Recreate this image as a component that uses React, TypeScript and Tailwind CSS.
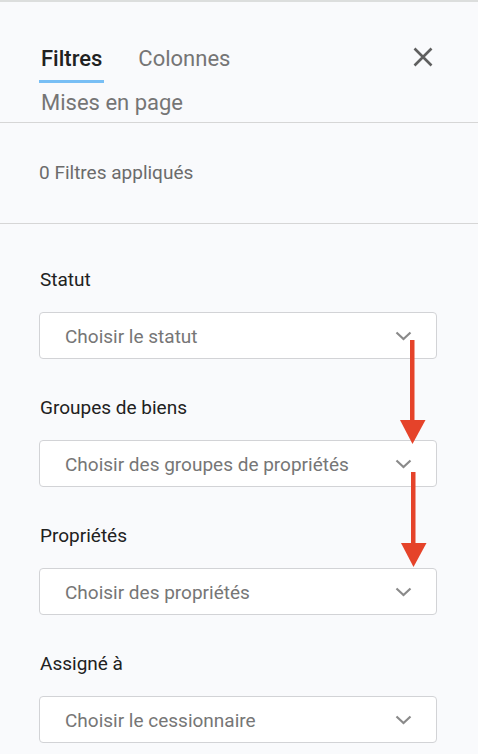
const fields = [
  { label: 'Statut', placeholder: 'Choisir le statut' },
  { label: 'Groupes de biens', placeholder: 'Choisir des groupes de propriétés' },
  { label: 'Propriétés', placeholder: 'Choisir des propriétés' },
  { label: 'Assigné à', placeholder: 'Choisir le cessionnaire' },
]

function Chevron() {
  return (
    <svg width="17" height="10" viewBox="0 0 17 10" fill="none">
      <path d="M1.5 1.5 L8.5 8 L15.5 1.5" stroke="#8a8a8a" strokeWidth="2.2" />
    </svg>
  )
}

function Arrow({ className, length }: { className: string; length: number }) {
  return (
    <svg className={className} width="30" height={length + 26} viewBox={`0 0 30 ${length + 26}`}>
      <rect x="12" y="2" width="4.5" height={length} fill="#e5432a" />
      <polygon points={`2,${length} 27.5,${length} 14.5,${length + 24}`} fill="#e5432a" />
    </svg>
  )
}

export default function App() {
  return (
    <div className="relative w-[478px] h-[754px] overflow-hidden bg-[#f9fafc] border-t-2 border-[#dcdedd] font-['Roboto',sans-serif]">
      <div className="flex justify-between items-start pl-[39px] pr-[45px] pt-[44px] pb-[6px] border-b border-[#d6d6d6]">
        <div className="flex flex-wrap w-[320px] gap-x-[32px] gap-y-[7px] text-[22px] leading-[26px]">
          <div className="px-[2px] pb-[8px] border-b-[3px] border-[#78bff5] font-medium text-[#212121]">Filtres</div>
          <div className="px-[2px] pb-[8px] border-b-[3px] border-transparent text-[#757575]">Colonnes</div>
          <div className="px-[2px] text-[#757575]">Mises en page</div>
        </div>
        <svg width="20" height="20" viewBox="0 0 20 20" className="mt-[1px]">
          <path d="M1.5 1.5 L18.5 18.5 M18.5 1.5 L1.5 18.5" stroke="#5f5f5f" strokeWidth="2.6" />
        </svg>
      </div>

      <div className="pl-[39px] pt-[38px] pb-[38px] border-b border-[#d6d6d6] text-[19px] leading-[24px] text-[#6b6b6b]">
        0 Filtres appliqués
      </div>

      <div className="flex flex-col gap-[37px] pl-[39px] pr-[41px] pt-[44px]">
        {fields.map((f) => (
          <div key={f.label} className="flex flex-col">
            <div className="text-[19px] leading-[24px] text-[#212121] pl-[1px]">{f.label}</div>
            <div className="mt-[20px] h-[47px] flex items-center justify-between pl-[25px] pr-[24px] bg-white border border-[#d2d3d6] rounded-[4px]">
              <span className="pt-[3px] text-[19px] text-[#767676]">{f.placeholder}</span>
              <Chevron />
            </div>
          </div>
        ))}
      </div>

      <Arrow className="absolute left-[398px] top-[336px]" length={82} />
      <Arrow className="absolute left-[399px] top-[468px]" length={73} />
    </div>
  )
}
